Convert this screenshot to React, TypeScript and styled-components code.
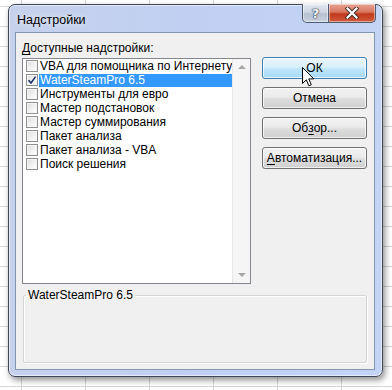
import React from 'react';
import styled, { createGlobalStyle } from 'styled-components';

const addins = [
  { name: 'VBA для помощника по Интернету', checked: false },
  { name: 'WaterSteamPro 6.5', checked: true },
  { name: 'Инструменты для евро', checked: false },
  { name: 'Мастер подстановок', checked: false },
  { name: 'Мастер суммирования', checked: false },
  { name: 'Пакет анализа', checked: false },
  { name: 'Пакет анализа - VBA', checked: false },
  { name: 'Поиск решения', checked: false },
];

const selectedIndex = 1;

const GlobalStyle = createGlobalStyle`
  html, body {
    margin: 0;
    padding: 0;
    width: 392px;
    height: 390px;
    overflow: hidden;
  }
  body {
    background-color: #ffffff;
    background-image:
      linear-gradient(to right, #d6d6d6 1px, transparent 1px),
      linear-gradient(to bottom, #d6d6d6 1px, transparent 1px);
    background-size: 64px 20px;
    background-position: 21px 6px;
    font-family: "Liberation Sans", Arial, sans-serif;
    font-size: 12px;
    color: #000;
  }
`;

const Page = styled.div`
  position: relative;
  padding: 4px 0 0 8px;
`;

const Window = styled.div`
  width: 375px;
  box-sizing: border-box;
  border: 1px solid #3d4758;
  border-radius: 7px;
  padding: 0 7px 6px 6px;
  background: linear-gradient(90deg, #c6d1ec 0%, #c0cff2 50%, #c4d4f5 100%);
  box-shadow: 2px 3px 6px rgba(0, 0, 0, 0.45), inset 0 0 0 1px rgba(255, 255, 255, 0.55);
`;

const TitleBar = styled.div`
  height: 27px;
  display: flex;
  align-items: flex-start;
  justify-content: space-between;
`;

const Title = styled.div`
  padding: 8px 0 0 2px;
  font-size: 12.5px;
  color: #000;
  text-shadow: 0 0 6px rgba(255, 255, 255, 0.9);
`;

const Caps = styled.div`
  display: flex;
  margin-right: -1px;
  margin-top: -1px;
`;

const CapButton = styled.div<{ $close?: boolean }>`
  height: 19px;
  width: ${({ $close }) => ($close ? '47px' : '27px')};
  box-sizing: border-box;
  border: 1px solid #4f5b6e;
  border-top: none;
  border-left: ${({ $close }) => ($close ? 'none' : '1px solid #4f5b6e')};
  border-radius: ${({ $close }) => ($close ? '0 0 5px 0' : '0 0 0 5px')};
  display: flex;
  align-items: center;
  justify-content: center;
  background: ${({ $close }) =>
    $close
      ? 'linear-gradient(180deg, #e8a393 0%, #d9775f 45%, #c2391c 55%, #d25a3c 100%)'
      : 'linear-gradient(180deg, #e3e8f1 0%, #cfd6e3 45%, #b7c0d0 55%, #c9d1de 100%)'};
  box-shadow: inset 0 0 0 1px rgba(255, 255, 255, 0.45);
`;

const HelpGlyph = styled.span`
  font-family: "DejaVu Sans", sans-serif;
  font-weight: bold;
  font-size: 13px;
  color: #eef2f8;
  text-shadow: 0 0 1px #3a4250, 0 0 1px #3a4250, 0 0 2px #3a4250;
  line-height: 1;
`;

const Client = styled.div`
  border: 1px solid #8296b4;
  background: #f0f0f0;
  padding: 8px 7px 6px 6px;
`;

const Main = styled.div`
  display: grid;
  grid-template-columns: 229px 105px;
  column-gap: 11px;
`;

const Left = styled.div`
  display: flex;
  flex-direction: column;
`;

const Label = styled.div`
  line-height: 15px;
  height: 15px;
  margin-bottom: 2px;
`;

const U = styled.span`
  text-decoration: underline;
  text-underline-offset: 2px;
`;

const ListBox = styled.div`
  height: 226px;
  box-sizing: border-box;
  border: 1px solid #828790;
  background: #fff;
  display: flex;
`;

const Items = styled.div`
  flex: 1;
  display: flex;
  flex-direction: column;
`;

const Row = styled.div`
  height: 14px;
  display: flex;
  align-items: center;
  padding-left: 3px;
`;

const Check = styled.span`
  width: 12px;
  height: 12px;
  box-sizing: border-box;
  border: 1px solid #8f8f8f;
  background: linear-gradient(135deg, #dcdcdc 0%, #f4f4f4 60%, #ffffff 100%);
  box-shadow: inset 0 0 0 1px #f6f6f6;
  margin-right: 1px;
  display: flex;
  align-items: center;
  justify-content: center;
  flex: none;
`;

const ItemText = styled.span<{ $selected?: boolean }>`
  flex: 1;
  height: 13px;
  line-height: 13px;
  padding-left: 1px;
  white-space: nowrap;
  background: ${({ $selected }) => ($selected ? '#3399ff' : 'transparent')};
  color: ${({ $selected }) => ($selected ? '#ffffff' : '#000000')};
`;

const ScrollBar = styled.div`
  width: 17px;
  background: #f5f5f5;
  border-left: 1px solid #e6e6e6;
  display: flex;
  flex-direction: column;
  justify-content: space-between;
  align-items: center;
  padding: 6px 0 6px;
`;

const Arrow = styled.span<{ $down?: boolean }>`
  width: 0;
  height: 0;
  border-left: 4px solid transparent;
  border-right: 4px solid transparent;
  ${({ $down }) =>
    $down ? 'border-top: 4px solid #a8a8a8;' : 'border-bottom: 4px solid #a8a8a8;'}
`;

const Right = styled.div`
  display: flex;
  flex-direction: column;
  gap: 8px;
  padding-top: 16px;
`;

const Button = styled.div<{ $hot?: boolean }>`
  height: 22px;
  box-sizing: border-box;
  border: 1px solid ${({ $hot }) => ($hot ? '#3c7fb1' : '#707070')};
  border-radius: 3px;
  display: flex;
  align-items: center;
  justify-content: center;
  background: ${({ $hot }) =>
    $hot
      ? 'linear-gradient(180deg, #eaf6fd 0%, #d9f0fc 45%, #bee6fd 55%, #a7d9f5 100%)'
      : 'linear-gradient(180deg, #f2f2f2 0%, #ebebeb 45%, #dddddd 55%, #cfcfcf 100%)'};
  box-shadow: inset 0 0 0 1px rgba(255, 255, 255, 0.7);
`;

const Group = styled.fieldset`
  margin: 4px 0 0 1px;
  padding: 0;
  min-width: 0;
  width: 344px;
  box-sizing: border-box;
  border: 1px solid #d5d5d5;
  box-shadow: inset 1px 1px 0 #ffffff, 1px 1px 0 #ffffff;
  border-radius: 2px;
`;

const Legend = styled.legend`
  margin-left: 2px;
  padding: 0 2px;
  line-height: 15px;
`;

const GroupBody = styled.div`
  height: 59px;
`;

const Cursor = styled.svg`
  position: absolute;
  left: 302px;
  top: 67px;
`;

const CheckMark = () => (
  <svg width="10" height="10" viewBox="0 0 10 10">
    <path d="M1.5 5.2 L4 8 L8.6 1.6" fill="none" stroke="#1c2f6a" strokeWidth="1.6" />
  </svg>
);

const CloseGlyph = () => (
  <svg width="14" height="12" viewBox="0 0 14 12">
    <path d="M2.5 1.5 L11.5 10.5 M11.5 1.5 L2.5 10.5" stroke="#3a2a28" strokeWidth="4" strokeLinecap="square" />
    <path d="M2.5 1.5 L11.5 10.5 M11.5 1.5 L2.5 10.5" stroke="#ffffff" strokeWidth="2.2" strokeLinecap="square" />
  </svg>
);

export default function App() {
  return (
    <>
      <GlobalStyle />
      <Page>
        <Window>
          <TitleBar>
            <Title>Надстройки</Title>
            <Caps>
              <CapButton>
                <HelpGlyph>?</HelpGlyph>
              </CapButton>
              <CapButton $close>
                <CloseGlyph />
              </CapButton>
            </Caps>
          </TitleBar>
          <Client>
            <Main>
              <Left>
                <Label>
                  <U>Д</U>оступные надстройки:
                </Label>
                <ListBox>
                  <Items>
                    {addins.map((a, i) => (
                      <Row key={a.name}>
                        <Check>{a.checked && <CheckMark />}</Check>
                        <ItemText $selected={i === selectedIndex}>{a.name}</ItemText>
                      </Row>
                    ))}
                  </Items>
                  <ScrollBar>
                    <Arrow />
                    <Arrow $down />
                  </ScrollBar>
                </ListBox>
              </Left>
              <Right>
                <Button $hot>ОК</Button>
                <Button>Отмена</Button>
                <Button>
                  Об<U>з</U>ор...
                </Button>
                <Button>
                  <U>А</U>втоматизация...
                </Button>
              </Right>
            </Main>
            <Group>
              <Legend>WaterSteamPro 6.5</Legend>
              <GroupBody />
            </Group>
          </Client>
        </Window>
        <Cursor width="13" height="20" viewBox="0 0 13 20">
          <path
            d="M0.5 0.5 L0.5 16.5 L4.3 12.8 L6.9 18.8 L9.3 17.8 L6.8 11.9 L11.8 11.9 Z"
            fill="#ffffff"
            stroke="#000000"
            strokeWidth="1"
          />
        </Cursor>
      </Page>
    </>
  );
}
